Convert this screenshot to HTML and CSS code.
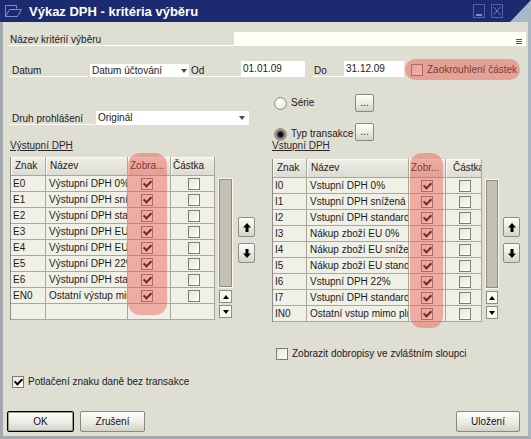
FILE: index.html
```html
<!DOCTYPE html>
<html lang="cs">
<head>
<meta charset="utf-8">
<title>Výkaz DPH - kritéria výběru</title>
<link rel="stylesheet" href="styles.css">
</head>
<body>
<div class="window">
  <header class="titlebar">
    <svg class="t-icon" width="18" height="14" viewBox="0 0 18 14" aria-hidden="true"><path d="M0.5 1.5H11.5V4.5M0.5 1.5V12.5H12.5L16.5 5.5H4.5L0.5 12.5" fill="none" stroke="#7e8ec4" stroke-width="1"/></svg>
    <span class="t-text">Výkaz DPH - kritéria výběru</span>
    <div class="t-ctrls">
      <svg width="12" height="14" viewBox="0 0 12 14" aria-hidden="true"><rect x="0.5" y="0.5" width="11" height="13" fill="none" stroke="#55649f"/><rect x="3" y="10" width="6" height="2" fill="#7f8fc6"/></svg>
      <svg width="12" height="14" viewBox="0 0 12 14" aria-hidden="true"><rect x="0.5" y="0.5" width="11" height="13" fill="none" stroke="#55649f"/><path d="M2.5 3L9.5 11M9.5 3L2.5 11" stroke="#6f7fba" stroke-width="1"/></svg>
    </div>
  </header>

  <main class="body">
    <div class="row r-name">
      <div class="lbl lbl-name">Název kritérií výběru</div>
      <div class="field-name"><svg width="6" height="5" viewBox="0 0 6 5" aria-hidden="true"><path d="M0 0.5H6M0 2.5H6M0 4.5H6" stroke="#555" stroke-width="1"/></svg></div>
    </div>

    <div class="row r-date">
      <div class="lbl lbl-datum">Datum</div>
      <div class="select sel-datum"><span>Datum účtování</span><i class="arrow"></i></div>
      <div class="lbl lbl-od">Od</div>
      <div class="field f-od">01.01.09</div>
      <div class="lbl lbl-do">Do</div>
      <div class="field f-do">31.12.09</div>
      <div class="pill"><span class="cb"></span><span class="pill-lbl">Zaokrouhlení částek</span></div>
    </div>

    <div class="row r-mid">
      <div class="mid-left">
        <div class="lbl lbl-druh">Druh prohlášení</div>
        <div class="select sel-druh"><span>Originál</span><i class="arrow"></i></div>
      </div>
      <div class="mid-right">
        <div class="opt opt-serie"><span class="radio"></span><span class="opt-lbl">Série</span><button class="btn btn-dots">...</button></div>
        <div class="opt opt-typ"><span class="radio on"></span><span class="opt-lbl">Typ transakce</span><button class="btn btn-dots">...</button></div>
      </div>
    </div>

    <div class="row r-tables">
      <section class="group g-left">
        <div class="sec">Výstupní DPH</div>
        <div class="tblwrap">
          <div class="tbl">
            <div class="hl"></div>
            <div class="hdr"><div>Znak</div><div>Název</div><div class="h3">Zobra...</div><div class="h4">Částka</div></div>
            <div class="tr"><div class="c1">E0</div><div class="c2">Výstupní DPH 0%</div><div class="c3"><span class="cb on"></span></div><div class="c4"><span class="cb"></span></div></div>
            <div class="tr"><div class="c1">E1</div><div class="c2">Výstupní DPH snížená</div><div class="c3"><span class="cb on"></span></div><div class="c4"><span class="cb"></span></div></div>
            <div class="tr"><div class="c1">E2</div><div class="c2">Výstupní DPH standard</div><div class="c3"><span class="cb on"></span></div><div class="c4"><span class="cb"></span></div></div>
            <div class="tr"><div class="c1">E3</div><div class="c2">Výstupní DPH EU 0%</div><div class="c3"><span class="cb on"></span></div><div class="c4"><span class="cb"></span></div></div>
            <div class="tr"><div class="c1">E4</div><div class="c2">Výstupní DPH EU snížená</div><div class="c3"><span class="cb on"></span></div><div class="c4"><span class="cb"></span></div></div>
            <div class="tr"><div class="c1">E5</div><div class="c2">Výstupní DPH 22%</div><div class="c3"><span class="cb on"></span></div><div class="c4"><span class="cb"></span></div></div>
            <div class="tr"><div class="c1">E6</div><div class="c2">Výstupní DPH standard</div><div class="c3"><span class="cb on"></span></div><div class="c4"><span class="cb"></span></div></div>
            <div class="tr"><div class="c1">EN0</div><div class="c2">Ostatní výstup mimo plnění</div><div class="c3"><span class="cb on"></span></div><div class="c4"><span class="cb"></span></div></div>
            <div class="tr"><div class="c1"></div><div class="c2"></div><div class="c3"></div><div class="c4"></div></div>
          </div>
          <div class="sb">
            <div class="sb-track"></div>
            <div class="sb-btn"><i class="tri-up"></i></div>
            <div class="sb-btn"><i class="tri-down"></i></div>
          </div>
          <div class="moves">
            <div class="mv"><svg width="8" height="9" viewBox="0 0 8 9" aria-hidden="true"><path d="M4 0L8 4.5H5.5V9H2.5V4.5H0Z" fill="#000"/></svg></div>
            <div class="mv"><svg width="8" height="9" viewBox="0 0 8 9" aria-hidden="true"><path d="M4 9L8 4.5H5.5V0H2.5V4.5H0Z" fill="#000"/></svg></div>
          </div>
        </div>
      </section>

      <section class="group g-right">
        <div class="sec">Vstupní DPH</div>
        <div class="tblwrap">
          <div class="tbl">
            <div class="hl"></div>
            <div class="hdr"><div>Znak</div><div>Název</div><div class="h3">Zobr...</div><div class="h4">Částka</div></div>
            <div class="tr"><div class="c1">I0</div><div class="c2">Vstupní DPH 0%</div><div class="c3"><span class="cb on"></span></div><div class="c4"><span class="cb"></span></div></div>
            <div class="tr"><div class="c1">I1</div><div class="c2">Vstupní DPH snížená</div><div class="c3"><span class="cb on"></span></div><div class="c4"><span class="cb"></span></div></div>
            <div class="tr"><div class="c1">I2</div><div class="c2">Vstupní DPH standard</div><div class="c3"><span class="cb on"></span></div><div class="c4"><span class="cb"></span></div></div>
            <div class="tr"><div class="c1">I3</div><div class="c2">Nákup zboží EU 0%</div><div class="c3"><span class="cb on"></span></div><div class="c4"><span class="cb"></span></div></div>
            <div class="tr"><div class="c1">I4</div><div class="c2">Nákup zboží EU snížená</div><div class="c3"><span class="cb on"></span></div><div class="c4"><span class="cb"></span></div></div>
            <div class="tr"><div class="c1">I5</div><div class="c2">Nákup zboží EU standard</div><div class="c3"><span class="cb on"></span></div><div class="c4"><span class="cb"></span></div></div>
            <div class="tr"><div class="c1">I6</div><div class="c2">Vstupní DPH 22%</div><div class="c3"><span class="cb on"></span></div><div class="c4"><span class="cb"></span></div></div>
            <div class="tr"><div class="c1">I7</div><div class="c2">Vstupní DPH standard</div><div class="c3"><span class="cb on"></span></div><div class="c4"><span class="cb"></span></div></div>
            <div class="tr"><div class="c1">IN0</div><div class="c2">Ostatní vstup mimo plnění</div><div class="c3"><span class="cb on"></span></div><div class="c4"><span class="cb"></span></div></div>
          </div>
          <div class="sb">
            <div class="sb-track"></div>
            <div class="sb-btn"><i class="tri-up"></i></div>
            <div class="sb-btn"><i class="tri-down"></i></div>
          </div>
          <div class="moves">
            <div class="mv"><svg width="8" height="9" viewBox="0 0 8 9" aria-hidden="true"><path d="M4 0L8 4.5H5.5V9H2.5V4.5H0Z" fill="#000"/></svg></div>
            <div class="mv"><svg width="8" height="9" viewBox="0 0 8 9" aria-hidden="true"><path d="M4 9L8 4.5H5.5V0H2.5V4.5H0Z" fill="#000"/></svg></div>
          </div>
        </div>
      </section>
    </div>

    <div class="row r-dobro"><span class="cb"></span><span class="cb-lbl">Zobrazit dobropisy ve zvláštním sloupci</span></div>
    <div class="row r-potl"><span class="cb on"></span><span class="cb-lbl">Potlačení znaku daně bez transakce</span></div>

    <div class="row r-btns">
      <button class="btn btn-ok">OK</button>
      <button class="btn btn-cancel">Zrušení</button>
      <button class="btn btn-save">Uložení</button>
    </div>
  </main>
</div>
</body>
</html>
```

FILE: styles.css
```css
* { box-sizing: border-box; }
html, body { margin: 0; padding: 0; }
body {
  width: 531px;
  height: 439px;
  overflow: hidden;
  font-family: "Liberation Sans", Arial, sans-serif;
  font-size: 10px;
  color: #1a1a1a;
  background: #dfded2;
}
.window { width: 531px; height: 439px; display: flex; flex-direction: column; }

/* title bar */
.titlebar {
  position: relative;
  flex: none;
  height: 22px;
  background: #1c2a6f;
  display: flex;
  align-items: center;
  padding-left: 5px;
}
.titlebar::after {
  content: "";
  position: absolute;
  top: 0;
  right: 0;
  width: 21px;
  height: 22px;
  background: #a7b9c7;
  clip-path: polygon(100% 0, 100% 100%, 0 100%);
}
.t-icon { flex: none; }
.t-text { margin-left: 6px; color: #fff; font-weight: bold; font-size: 13px; white-space: nowrap; }
.t-ctrls { margin-left: auto; margin-right: 28px; display: flex; gap: 6px; }
.t-ctrls svg { display: block; }

/* body */
.body {
  flex: 1;
  border: 3px solid #a3a9ad;
  border-top: 0;
  border-right-color: #abb7c0;
  padding: 10px 2px 0 5px;
  display: flex;
  flex-direction: column;
}
.row { display: flex; flex: none; }
.lbl { border-bottom: 1px solid #fff; padding-left: 2px; line-height: 12px; white-space: nowrap; flex: none; }
.field { background: #fff; white-space: nowrap; flex: none; padding-left: 2px; line-height: 16px; height: 16px; margin-top: 2px; }
.select { background: #fff; display: flex; align-items: center; justify-content: space-between; padding-left: 2px; white-space: nowrap; flex: none; }
.arrow { width: 0; height: 0; border-left: 3.5px solid transparent; border-right: 3.5px solid transparent; border-top: 4px solid #4a4a4a; }

.r-name { height: 14px; }
.lbl-name { width: 226px; height: 14px; padding-top: 2px; }
.field-name { flex: 1; background: #fffff3; display: flex; align-items: center; justify-content: flex-end; padding: 4px 4px 0 0; }
.field-name svg { display: block; }

.r-date { margin-top: 13px; height: 21px; align-items: flex-start; }
.lbl-datum { margin-left: 2px; width: 78px; height: 18px; padding-top: 6px; }
.sel-datum { margin-left: 2px; margin-top: 5px; width: 99px; height: 13px; line-height: 13px; padding-right: 2px; }
.lbl-od { width: 52px; height: 18px; padding-top: 6px; }
.f-od { width: 64px; }
.lbl-do { margin-left: 7px; width: 32px; height: 18px; padding-top: 6px; }
.f-do { width: 60px; }
.pill { position: relative; margin-left: 1px; width: 115px; height: 21px; display: flex; align-items: center; padding-left: 6px; gap: 4px; white-space: nowrap; }
.pill::after { content: ""; position: absolute; inset: 0; border-radius: 11px; background: rgba(235, 88, 78, 0.45); }
.pill-lbl { line-height: 12px; }

.r-mid { margin-top: 14px; height: 46px; }
.mid-left { width: 266px; flex: none; display: flex; align-items: flex-start; padding-top: 16px; }
.lbl-druh { margin-left: 2px; width: 85px; height: 15px; padding-top: 3px; }
.sel-druh { margin-left: 1px; margin-top: 1px; width: 153px; height: 14px; line-height: 14px; padding-right: 4px; }
.mid-right { display: flex; flex-direction: column; }
.opt { display: flex; align-items: flex-start; height: 18px; }
.opt-typ { margin-top: 11px; }
.opt .radio, .opt .opt-lbl { margin-top: 3px; }
.opt-typ .radio, .opt-typ .opt-lbl { margin-top: 5px; }
.opt-lbl { width: 64px; margin-left: 4px; line-height: 12px; white-space: nowrap; }
.radio {
  flex: none;
  width: 13px; height: 13px;
  border-radius: 50%;
  border: 1px solid #8a897f;
  background: radial-gradient(circle at 40% 40%, #ffffff, #e2e1d8);
}
.radio.on { background: radial-gradient(circle, #0c0c0c 0 2px, #4c4c4c 3px, #8c8c84 4.5px, #c6c6be 6px); }

/* buttons */
.btn {
  font: inherit;
  color: #111;
  padding: 0;
  border: 1px solid #8a897e;
  border-radius: 2px;
  background: linear-gradient(#fdfdfb, #ecebe4 55%, #d2d1c6);
  display: flex;
  align-items: center;
  justify-content: center;
  flex: none;
}
.btn-dots { width: 19px; height: 18px; line-height: 10px; }

/* tables */
.r-tables { align-items: flex-start; }
.group { flex: none; }
.g-left { margin-left: 2px; width: 262px; }
.sec { line-height: 12px; height: 12px; text-decoration: underline; color: #2a2a2a; white-space: nowrap; }
.tblwrap { display: flex; align-items: flex-start; }
.g-left .tblwrap { margin-top: 5px; }
.g-right .tblwrap { margin-top: 7px; }
.tbl { position: relative; display: flex; flex-direction: column; border-left: 1px solid #8f8e85; background: #f1f0e7; }
.hdr, .tr { display: grid; }
.g-left .hdr, .g-left .tr { grid-template-columns: 35px 82px 43px 44px; }
.g-right .hdr, .g-right .tr { grid-template-columns: 34px 102px 37px 36px; }
.hdr { height: 19px; }
.hdr > div {
  background: linear-gradient(#f0efe8, #dddcd1);
  border-right: 1px solid #a8a79b;
  border-bottom: 1px solid #a8a79b;
  box-shadow: inset 1px 1px #fbfbf8;
  padding-left: 4px;
  line-height: 18px;
  overflow: hidden;
  white-space: nowrap;
}
.hdr > .h3 { padding-left: 2px; }
.g-left .hdr > .h4 { padding-left: 2px; }
.g-right .hdr > .h4 { padding-left: 7px; }
.tr { height: 16px; }
.tr > div {
  border-right: 1px solid #a8a79b;
  border-bottom: 1px solid #a8a79b;
  line-height: 15px;
  overflow: hidden;
  white-space: nowrap;
}
.tr > .c1 { padding-left: 2px; }
.tr > .c2 { padding-left: 3px; }
.tr > .c3, .tr > .c4 { display: flex; align-items: center; }
.g-left .c3 { padding-left: 13px; }
.g-left .c4 { padding-left: 17px; }
.g-right .c3 { padding-left: 12px; }
.g-right .c4 { padding-left: 13px; }

.hl { position: absolute; z-index: 2; pointer-events: none; border-radius: 12px; background: rgba(235, 88, 78, 0.45); }
.g-left .hl { left: 117px; top: -4px; width: 39px; height: 162px; }
.g-right .hl { left: 137px; top: -6px; width: 33px; height: 175px; }

/* checkbox */
.cb {
  flex: none;
  width: 12px; height: 12px;
  border: 1px solid #7d7c72;
  background: linear-gradient(135deg, #e6e6de, #fdfdfa);
  display: flex;
  align-items: center;
  justify-content: center;
}
.cb.on::after {
  content: "";
  width: 3px;
  height: 6px;
  margin-top: -2px;
  border: solid #000;
  border-width: 0 2px 2px 0;
  transform: rotate(45deg);
}

/* scrollbar */
.sb { flex: none; display: flex; flex-direction: column; }
.g-left .sb { margin-left: 3px; width: 15px; margin-top: 21px; }
.g-right .sb { margin-left: 3px; width: 14px; margin-top: 20px; }
.sb-track { height: 110px; border: 1px solid #f7f7f2; background: #c2c1b2; box-shadow: inset 0 0 0 1px #8e8d82; }
.sb-btn { height: 13px; margin: 2px 1px 0; border: 1px solid #8e8d82; background: #f7f7f2; display: flex; align-items: center; justify-content: center; }
.tri-up { width: 0; height: 0; border-left: 3.5px solid transparent; border-right: 3.5px solid transparent; border-bottom: 4px solid #000; }
.tri-down { width: 0; height: 0; border-left: 3.5px solid transparent; border-right: 3.5px solid transparent; border-top: 4px solid #000; }

.moves { flex: none; display: flex; flex-direction: column; gap: 6px; width: 17px; }
.g-left .moves { margin-left: 5px; margin-top: 60px; }
.g-right .moves { margin-left: 4px; margin-top: 58px; }
.mv {
  width: 17px; height: 20px;
  border: 1px solid #8e8d82;
  border-radius: 2px;
  background: linear-gradient(#fcfcf9, #e9e8e0 55%, #d4d3c8);
  display: flex; align-items: center; justify-content: center;
}
.mv svg { display: block; }

/* bottom rows */
.r-dobro { margin-top: 26px; padding-left: 268px; align-items: center; height: 12px; }
.r-potl { margin-top: 16px; padding-left: 4px; align-items: center; height: 12px; }
.cb-lbl { margin-left: 4px; line-height: 12px; white-space: nowrap; }

.r-btns { margin-top: 23px; height: 21px; margin-left: -1px; }
.r-btns .btn { height: 21px; }
.btn-ok { width: 67px; border-color: #000; box-shadow: inset 0 0 0 1px #9a998e; }
.btn-cancel { width: 65px; margin-left: 6px; }
.btn-save { width: 64px; margin-left: auto; margin-right: 6px; }
```
